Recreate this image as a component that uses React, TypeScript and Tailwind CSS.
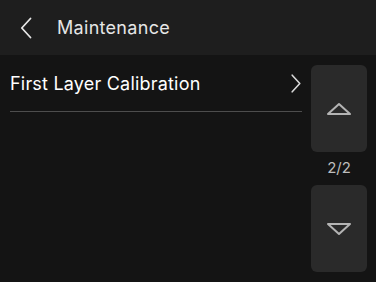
export default function App() {
  return (
    <div className="w-[376px] h-[282px] bg-[#141414] flex flex-col font-['Inter',sans-serif] overflow-hidden">
      {/* Header */}
      <div className="h-[55px] bg-[#1e1e1e] flex items-center shrink-0">
        <svg className="ml-[20px]" width="12" height="22" viewBox="0 0 12 22" fill="none">
          <path d="M10.5 1.5 L1.8 11 L10.5 20.5" stroke="#e6e6e6" strokeWidth="1.8" strokeLinecap="round" strokeLinejoin="round" />
        </svg>
        <span className="ml-[25px] text-[18px] text-[#e6e6e6] tracking-[0.3px]">Maintenance</span>
      </div>

      <div className="flex flex-1">
        {/* List */}
        <div className="flex-1 pl-[10px] pr-[9px]">
          <div className="h-[57px] flex items-center justify-between border-b border-[#4d4d4d] pt-[1px]">
            <span className="text-[18px] text-white tracking-[0.2px]">First Layer Calibration</span>
            <svg className="mr-[1px]" width="10" height="19" viewBox="0 0 10 19" fill="none">
              <path d="M1.2 1.2 L8.8 9.5 L1.2 17.8" stroke="#d8d8d8" strokeWidth="1.6" strokeLinecap="round" strokeLinejoin="round" />
            </svg>
          </div>
        </div>

        {/* Pager */}
        <div className="w-[56px] mr-[9px] flex flex-col items-center pt-[10px]">
          <button className="w-[56px] h-[87px] rounded-[6px] bg-[#2a2a2a] flex items-center justify-center">
            <svg width="26" height="14" viewBox="0 0 26 14" fill="none">
              <path d="M2 12 L13 2 L24 12 Z" stroke="#b4b4b4" strokeWidth="2" strokeLinejoin="round" />
            </svg>
          </button>
          <div className="h-[33px] flex items-center text-[15px] text-[#bdbdbd]">2/2</div>
          <button className="w-[56px] h-[87px] rounded-[6px] bg-[#2a2a2a] flex items-center justify-center">
            <svg width="26" height="14" viewBox="0 0 26 14" fill="none">
              <path d="M2 2 L13 12 L24 2 Z" stroke="#b4b4b4" strokeWidth="2" strokeLinejoin="round" />
            </svg>
          </button>
        </div>
      </div>
    </div>
  );
}
